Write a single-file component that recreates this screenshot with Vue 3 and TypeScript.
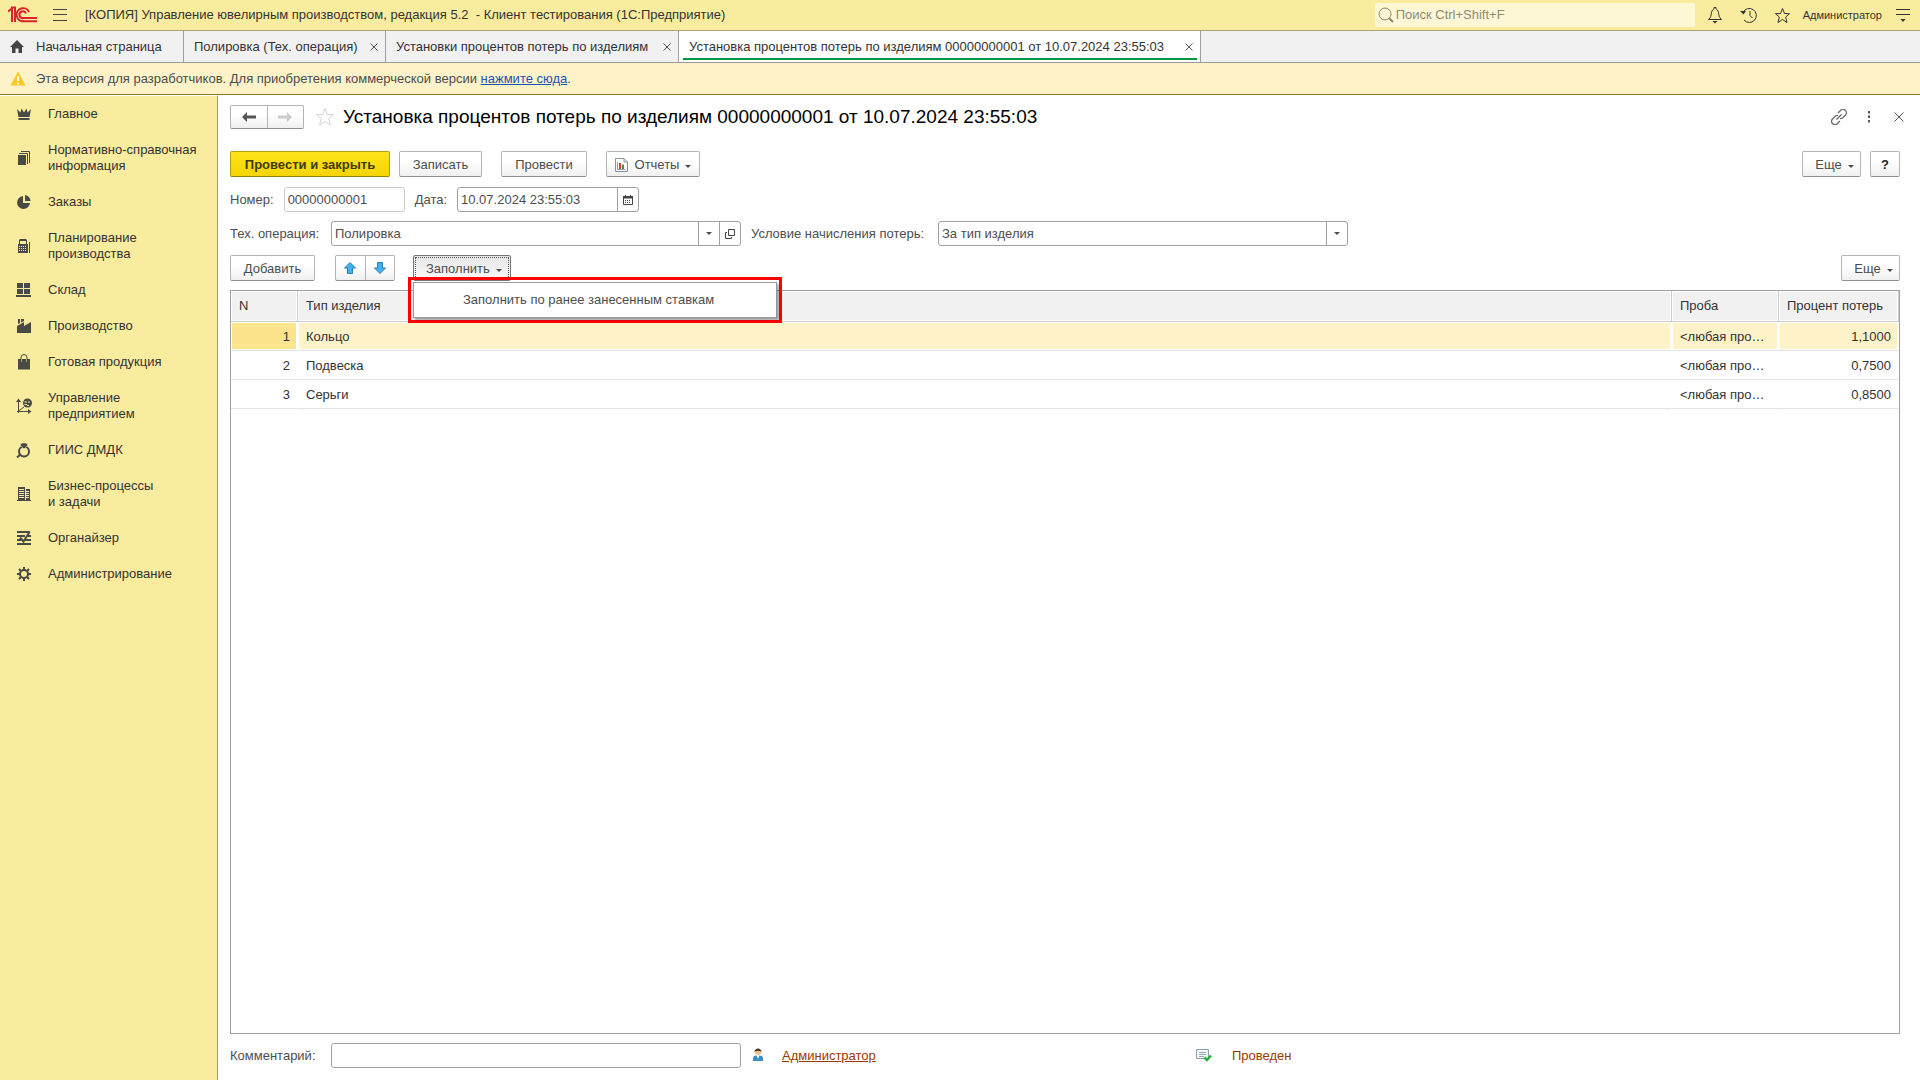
<script setup lang="ts">
import { ref } from 'vue'

interface Tab {
  title: string
  width: number
  active?: boolean
}
interface Section {
  icon: string
  lines: string[]
}
interface LossRow {
  n: number
  type: string
  probe: string
  percent: string
}

const tabs: Tab[] = [
  { title: 'Полировка (Тех. операция)', width: 202 },
  { title: 'Установки процентов потерь по изделиям', width: 293 },
  { title: 'Установка процентов потерь по изделиям 00000000001 от 10.07.2024 23:55:03', width: 522, active: true },
]

const sections: Section[] = [
  { icon: 'crown', lines: ['Главное'] },
  { icon: 'books', lines: ['Нормативно-справочная', 'информация'] },
  { icon: 'pie', lines: ['Заказы'] },
  { icon: 'calc', lines: ['Планирование', 'производства'] },
  { icon: 'boxes', lines: ['Склад'] },
  { icon: 'factory', lines: ['Производство'] },
  { icon: 'bag', lines: ['Готовая продукция'] },
  { icon: 'chart', lines: ['Управление', 'предприятием'] },
  { icon: 'ring', lines: ['ГИИС ДМДК'] },
  { icon: 'building', lines: ['Бизнес-процессы', 'и задачи'] },
  { icon: 'organizer', lines: ['Органайзер'] },
  { icon: 'gear', lines: ['Администрирование'] },
]

const rows: LossRow[] = [
  { n: 1, type: 'Кольцо', probe: '<любая про…', percent: '1,1000' },
  { n: 2, type: 'Подвеска', probe: '<любая про…', percent: '0,7500' },
  { n: 3, type: 'Серьги', probe: '<любая про…', percent: '0,8500' },
]

const selected = ref(1)
const number = ref('00000000001')
const date = ref('10.07.2024 23:55:03')
const operation = ref('Полировка')
const condition = ref('За тип изделия')
const comment = ref('')
const search = ref('')
</script>

<template>
  <div class="app">
    <header class="titlebar">
      <svg class="logo" width="30" height="18" viewBox="0 0 30 18" fill="none" stroke="#d9232e" stroke-width="2">
        <path d="M0 5.500L4 2.500V16M3 1.500H7V16" />
        <path d="M21 6A6.500 6.500 0 1 0 15.500 15.200H29" />
        <path d="M18 7.500A3.400 3.400 0 1 0 15.500 12H29" />
      </svg>
      <button class="plain burger" aria-label="Меню">
        <svg width="14" height="14" viewBox="0 0 14 14" stroke="#444" stroke-width="1"><path d="M0 1.500H14M0 6.500H14M0 12.500H14" /></svg>
      </button>
      <div class="app-name">[КОПИЯ] Управление ювелирным производством, редакция 5.2 &nbsp;- Клиент тестирования (1С:Предприятие)</div>
      <label class="search">
        <svg width="16" height="16" viewBox="0 0 16 16" fill="none" stroke="#8e8868"><circle cx="7" cy="7" r="6" /><path d="M11 11L15 15" stroke-width="2" /></svg>
        <input v-model="search" type="text" placeholder="Поиск Ctrl+Shift+F" aria-label="Поиск" />
      </label>
      <button class="plain tool" aria-label="Уведомления">
        <svg width="16" height="18" viewBox="0 0 16 18" fill="none" stroke="#333"><path d="M1.500 13.500C4 11 4 10 4.500 6.500C5 4 6 3.500 7 3V1.500H9V3C10 3.500 11 4 11.500 6.500C12 10 12 11 14.500 13.500Z" /><path d="M5.500 15H10.500L8 17.500Z" fill="#333" stroke="none" /></svg>
      </button>
      <button class="plain tool" aria-label="История">
        <svg width="18" height="18" viewBox="0 0 18 18" fill="none" stroke="#333"><path d="M3 6.500A7 7 0 1 1 4 14M10 5V9.500L12.500 12" /><path d="M0 5L6 5L3.500 8.500Z" fill="#333" stroke="none" /></svg>
      </button>
      <button class="plain tool" aria-label="Избранное">
        <svg width="17" height="17" viewBox="0 0 17 17" fill="none" stroke="#333"><path d="M8.500 1.500L10.500 6.500L15.500 6.700L11.700 10L13 15.500L8.500 12.500L4 15.500L5.300 10L1.500 6.700L6.500 6.500Z" /></svg>
      </button>
      <div class="user">Администратор</div>
      <button class="plain settings" aria-label="Настройки">
        <svg width="14" height="14" viewBox="0 0 14 14" stroke="#333"><path d="M0 1.500H14M0 6.500H14" /><path d="M4.500 11H9.500L7 14Z" fill="#333" stroke="none" /></svg>
      </button>
    </header>

    <nav class="tabs">
      <button class="tab home">
        <svg width="14" height="13" viewBox="0 0 14 13" fill="#444"><path d="M7 0L14 7H12V13H8.500V8.500H5.500V13H2V7H0Z" /></svg>
        <span>Начальная страница</span>
      </button>
      <button v-for="tab in tabs" :key="tab.title" class="tab" :class="{ active: tab.active }" :style="{ width: tab.width + 'px' }">
        <span>{{ tab.title }}</span>
        <svg width="8" height="8" viewBox="0 0 8 8" stroke="#555" stroke-width="1"><path d="M0.500 0.500L7.500 7.500M7.500 0.500L0.500 7.500" /></svg>
      </button>
    </nav>

    <div class="banner">
      <svg width="16" height="15" viewBox="0 0 16 15"><path d="M8 0.500L15.500 14.500H0.500Z" fill="#fbc926" /><path d="M8 5V10M8 11.500V13.500" stroke="#fff" stroke-width="2" /></svg>
      <span>Эта версия для разработчиков. Для приобретения коммерческой версии <a href="#">нажмите сюда</a>.</span>
    </div>

    <div class="body">
      <aside class="sidebar">
        <a v-for="s in sections" :key="s.icon" href="#" class="section">
          <svg width="16" height="16" viewBox="0 0 16 16" fill="#4a4a44">
            <path v-if="s.icon === 'crown'" d="M1 3L4.500 6.500L5.500 2.500L8 6.500L10.500 2.500L11.500 6.500L15 3L13.500 11H2.500ZM2.500 12H13.500V14H2.500Z" />
            <template v-else-if="s.icon === 'books'">
              <path d="M2 5H10V15H2Z" />
              <path d="M3 3.500H11.500V14M5 1.500H13.500V13" fill="none" stroke="#4a4a44" />
            </template>
            <template v-else-if="s.icon === 'pie'">
              <path d="M7 2A6.500 6.500 0 1 0 14 9H7Z" />
              <path d="M9 1A6.500 6.500 0 0 1 14.500 7H9Z" />
            </template>
            <template v-else-if="s.icon === 'calc'">
              <path d="M2 6H12V15H2ZM4 1H10L11 2V6H3V2Z" />
              <path d="M4 3H10V6H4Z" fill="#faec9e" />
              <path d="M3 8.500H11M3 10.500H11M3 12.500H11" stroke="#faec9e" stroke-dasharray="1 1" />
              <path d="M13.500 4V15" stroke="#4a4a44" />
            </template>
            <path v-else-if="s.icon === 'boxes'" d="M1 1H7V6H1ZM8 1H14V6H8ZM1 7H7V12H1ZM8 7H14V12H8ZM0 13H15V15H0Z" />
            <path v-else-if="s.icon === 'factory'" d="M2 1H4V5L2 6ZM5 1H8V3L5 4.500ZM1 8L8 4V8L15 4V15H1Z" />
            <template v-else-if="s.icon === 'bag'">
              <path d="M2 5H14V15.500H2Z" />
              <path d="M5.500 8V5M10.500 8V5" stroke="#a39b70" />
              <path d="M5 5V3.500A3 3 0 0 1 11 3.500V5" fill="none" stroke="#4a4a44" />
            </template>
            <template v-else-if="s.icon === 'chart'">
              <path d="M2.500 2V15M1 13.500H14M2.500 13L8 9" stroke="#4a4a44" />
              <path d="M0 4L2.500 0.500L5 4ZM12 11L15.500 13.500L12 16Z" />
              <circle cx="11.500" cy="5" r="4.500" />
              <path d="M8.500 4H11M8.500 6.500H11M13 3V5M11 7.500H13" stroke="#faec9e" />
            </template>
            <template v-else-if="s.icon === 'ring'">
              <circle cx="8" cy="9.500" r="5" fill="none" stroke="#4a4a44" stroke-width="2" />
              <path d="M6 1H10L12 3L8 7L4 3Z" stroke="#faec9e" stroke-width="0.500" />
              <path d="M5 12L1 15.500" stroke="#4a4a44" stroke-width="2" />
            </template>
            <template v-else-if="s.icon === 'building'">
              <path d="M2 1H9V15H2ZM10 3H14V15H10ZM1 14H15V15H1Z" />
              <path d="M3 3.500H8M3 5.500H8M3 7.500H8M3 9.500H8M3 11.500H8M10 5.500H13M10 7.500H13M10 9.500H13M10 11.500H13" stroke="#faec9e" />
            </template>
            <path v-else-if="s.icon === 'organizer'" d="M1 2H14M1 6H9M12 6H15M1 10H5M9 10H15M1 14H15M4 7.500L7.500 11.500L13.500 2" fill="none" stroke="#4a4a44" stroke-width="2" />
            <template v-else>
              <circle cx="8" cy="8" r="4" fill="none" stroke="#4a4a44" stroke-width="2" />
              <path d="M8 1V4M8 12V15M1 8H4M12 8H15M3 3L5 5M11 11L13 13M13 3L11 5M5 11L3 13" stroke="#4a4a44" stroke-width="2" />
            </template>
          </svg>
          <span><template v-for="(line, i) in s.lines" :key="line"><br v-if="i > 0" />{{ line }}</template></span>
        </a>
      </aside>

      <main class="form">
        <div class="heading">
          <div class="pair">
            <button aria-label="Назад"><svg width="14" height="10" viewBox="0 0 14 10"><path d="M0 5L5 0V3.500H14V6.500H5V10Z" fill="#555" /></svg></button>
            <button aria-label="Вперед"><svg width="14" height="10" viewBox="0 0 14 10"><path d="M14 5L9 0V3.500H0V6.500H9V10Z" fill="#ccc" /></svg></button>
          </div>
          <button class="plain star" aria-label="В избранное">
            <svg width="20" height="20" viewBox="0 0 20 20" fill="none" stroke="#d4d4d4"><path d="M10 1.500L12.300 7.500L18.500 7.700L13.700 11.600L15.400 18L10 14.400L4.600 18L6.300 11.600L1.500 7.700L7.700 7.500Z" /></svg>
          </button>
          <h1>Установка процентов потерь по изделиям 00000000001 от 10.07.2024 23:55:03</h1>
          <div class="window-tools">
            <button class="plain" aria-label="Ссылка">
              <svg width="16" height="16" viewBox="0 0 16 16" fill="none" stroke="#666" stroke-width="1.200"><path d="M7 4L9.500 1.500A3 3 0 0 1 14.500 6L11.500 9A3 3 0 0 1 9 9.500M9 12L6.500 14.500A3 3 0 0 1 1.500 10L4.500 7A3 3 0 0 1 7 6.500M5.500 10.500L10.500 5.500" /></svg>
            </button>
            <button class="plain" aria-label="Еще действия">
              <svg width="16" height="12" viewBox="0 0 16 12" fill="#555"><path d="M7 0H9V2.500H7ZM7 4.500H9V7H7ZM7 9H9V11.500H7Z" /></svg>
            </button>
            <button class="plain" aria-label="Закрыть">
              <svg width="16" height="10" viewBox="0 0 16 10" stroke="#555"><path d="M3.500 0.500L12.500 9.500M12.500 0.500L3.500 9.500" /></svg>
            </button>
          </div>
        </div>

        <div class="commands">
          <button class="btn primary">Провести и закрыть</button>
          <button class="btn save">Записать</button>
          <button class="btn post">Провести</button>
          <button class="btn reports">
            <svg width="13" height="14" viewBox="0 0 13 14"><path d="M0.500 0.500H9L12.500 4V13.500H0.500Z" fill="#fff" stroke="#8595a5" /><path d="M9 0.500V4H12.500" fill="none" stroke="#8595a5" /><path d="M2.500 4V11.500H10.500" fill="none" stroke="#99a" /><path d="M4 5H6V11H4Z" fill="#e23b30" /><path d="M7 6.500H9V11H7Z" fill="#2f9e3f" /></svg>
            Отчеты<i class="caret"></i>
          </button>
          <button class="btn more right">Еще<i class="caret"></i></button>
          <button class="btn help">?</button>
        </div>

        <div class="fields head-fields">
          <label for="number">Номер:</label>
          <div class="field pale number"><input id="number" v-model="number" type="text" /></div>
          <label for="date">Дата:</label>
          <div class="field date">
            <input id="date" v-model="date" type="text" />
            <button aria-label="Выбрать дату">
              <svg width="10" height="10" viewBox="0 0 10 10"><path d="M0.500 1.500H9.500V9.500H0.500Z" fill="none" stroke="#444" /><path d="M0 1H10V3.500H0ZM2 0H3V1H2ZM7 0H8V1H7Z" fill="#444" /><path d="M2 5.500H8M2 7.500H8" stroke="#444" stroke-dasharray="1 1" /></svg>
            </button>
          </div>
        </div>

        <div class="fields">
          <label for="operation" class="first">Тех. операция:</label>
          <div class="field wide">
            <input id="operation" v-model="operation" type="text" />
            <button aria-label="Выбрать из списка"><i class="caret"></i></button>
            <button aria-label="Открыть"><svg width="10" height="10" viewBox="0 0 10 10" fill="none" stroke="#444"><path d="M3.500 0.500H9.500V6.500H3.500ZM2 3.500H0.500V9.500H6.500V8" /></svg></button>
          </div>
          <label for="condition" class="second">Условие начисления потерь:</label>
          <div class="field wide">
            <select id="condition" v-model="condition"><option>За тип изделия</option></select>
            <span class="drop"><i class="caret"></i></span>
          </div>
        </div>

        <div class="commands table-commands">
          <button class="btn add">Добавить</button>
          <div class="pair arrows">
            <button aria-label="Вверх"><svg width="12" height="12" viewBox="0 0 12 12"><path d="M6 0.500L11.500 6H8.500V11.500H3.500V6H0.500Z" fill="#43b0f1" stroke="#2a7fb5" /></svg></button>
            <button aria-label="Вниз"><svg width="12" height="12" viewBox="0 0 12 12"><path d="M6 11.500L11.500 6H8.500V0.500H3.500V6H0.500Z" fill="#43b0f1" stroke="#2a7fb5" /></svg></button>
          </div>
          <div class="fill">
            <button class="btn pressed">Заполнить<i class="caret"></i></button>
            <div class="highlight">
              <div class="menu" role="menu"><button role="menuitem">Заполнить по ранее занесенным ставкам</button></div>
            </div>
          </div>
          <button class="btn more right">Еще<i class="caret"></i></button>
        </div>

        <div class="grid">
          <table>
            <colgroup><col class="c-n" /><col /><col class="c-probe" /><col class="c-percent" /></colgroup>
            <thead>
              <tr><th>N</th><th>Тип изделия</th><th>Проба</th><th>Процент потерь</th></tr>
            </thead>
            <tbody>
              <tr v-for="row in rows" :key="row.n" :class="{ selected: row.n === selected }" @click="selected = row.n">
                <td class="num">{{ row.n }}</td>
                <td>{{ row.type }}</td>
                <td>{{ row.probe }}</td>
                <td class="num">{{ row.percent }}</td>
              </tr>
            </tbody>
          </table>
        </div>

        <footer class="fields footer">
          <label for="comment" class="first">Комментарий:</label>
          <div class="field wide"><input id="comment" v-model="comment" type="text" /></div>
          <div class="author">
            <svg width="10" height="13" viewBox="0 0 10 13"><path d="M0 13V10C0 8 2 7.500 5 7.500S10 8 10 10V13Z" fill="#3a8fc4" /><path d="M3.500 7H6.500L5 11Z" fill="#fff" /><circle cx="5" cy="4" r="3" fill="#f2bf7e" /><path d="M1.500 4.500C1 -1 9 -1 8.500 4.500L7.500 3H2.500Z" fill="#4a3b2c" /></svg>
            <a href="#">Администратор</a>
          </div>
          <div class="status">
            <svg width="16" height="13" viewBox="0 0 16 13" fill="none"><path d="M0.500 0.500H12.500V9.500H0.500Z" fill="#f4f8fb" stroke="#8d9db0" /><path d="M3 3.500H10M3 5.500H10M3 7.500H8" stroke="#9aa8b8" /><path d="M8.500 8.500L11 11L15 6.500" stroke="#25b03c" stroke-width="2.500" /></svg>
            <span>Проведен</span>
          </div>
        </footer>
      </main>
    </div>
  </div>
</template>

<style>
body {
  margin: 0;
}
</style>

<style scoped>
.app {
  display: flex;
  flex-direction: column;
  min-height: 100vh;
  background: #fff;
  color: #333;
  font: 13px/16px 'Liberation Sans', Arial, sans-serif;
}
.app *,
.app {
  box-sizing: border-box;
}
button,
input,
select {
  font: inherit;
  color: inherit;
  margin: 0;
}
svg {
  display: block;
  flex: none;
}
button {
  padding: 0;
  cursor: pointer;
}
.plain {
  display: flex;
  justify-content: center;
  border: 0;
  background: none;
}

.titlebar {
  display: flex;
  align-items: center;
  height: 31px;
  padding: 0 10px 0 8px;
  background: #faec9e;
  border-bottom: 1px solid #aca272;
}
.burger {
  margin-left: 15px;
}
.app-name {
  margin-left: 18px;
  flex: 1;
  white-space: nowrap;
}
.search {
  display: flex;
  align-items: center;
  width: 320px;
  height: 24px;
  margin-right: 3px;
  padding-left: 3px;
  gap: 2px;
  background: #fdf7d6;
  border-radius: 2px;
}
.search input {
  flex: 1;
  min-width: 0;
  padding: 0;
  border: 0;
  outline: 0;
  background: none;
}
.search input::placeholder {
  color: #8f8b75;
}
.tool {
  width: 34px;
}
.user {
  margin: 0 14px 0 3px;
  font-size: 11px;
}

.tabs {
  display: flex;
  height: 32px;
  background: #f1f1f1;
  border-bottom: 1px solid #9a9a9a;
}
.tab {
  display: flex;
  align-items: center;
  justify-content: space-between;
  padding: 0 7px 0 10px;
  border: 0;
  border-right: 1px solid #a0a0a0;
  background: none;
  white-space: nowrap;
}
.tab.home {
  justify-content: flex-start;
  gap: 12px;
  width: 184px;
}
.tab.active {
  background: linear-gradient(#009646, #009646) 4px 27px / calc(100% - 7px) 2px no-repeat #fff;
}

.banner {
  display: flex;
  align-items: center;
  gap: 10px;
  height: 32px;
  padding-left: 10px;
  background: #fdf2c8;
  border-bottom: 1px solid #8f7a26;
  color: #4d4d4d;
}
.banner a {
  color: #1a54b0;
}

.body {
  display: flex;
  flex: 1;
}
.sidebar {
  display: flex;
  flex-direction: column;
  flex: none;
  gap: 20px;
  width: 218px;
  padding: 10px 0 0 16px;
  background: #faec9e;
  border-top: 1px solid #fff;
  border-right: 1px solid #a09a70;
}
.section {
  display: flex;
  align-items: center;
  gap: 16px;
  color: #333;
  text-decoration: none;
}

.form {
  display: flex;
  flex-direction: column;
  flex: 1;
  min-width: 0;
  padding: 10px 20px 12px 12px;
}
.heading {
  display: flex;
  align-items: center;
  height: 24px;
}
.pair {
  display: flex;
  width: 74px;
  height: 24px;
  border: 1px solid #b4b4b4;
  border-bottom-color: #909090;
  border-radius: 2px;
  background: linear-gradient(#fff 40%, #f0f0f0);
}
.pair button {
  display: flex;
  flex: 1;
  align-items: center;
  justify-content: center;
  border: 0;
  background: none;
}
.pair button + button {
  border-left: 1px solid #b4b4b4;
}
.star {
  margin-left: 11px;
}
h1 {
  margin: 0 0 0 8px;
  flex: 1;
  color: #000;
  font-size: 19px;
  font-weight: 400;
  line-height: 24px;
  white-space: nowrap;
}
.window-tools {
  display: flex;
  align-items: center;
  gap: 14px;
  margin-right: -7px;
}

.commands {
  display: flex;
  margin-top: 22px;
}
.btn {
  display: flex;
  align-items: center;
  justify-content: center;
  height: 26px;
  padding-top: 1px;
  border: 1px solid #b4b4b4;
  border-bottom-color: #909090;
  border-radius: 2px;
  background: linear-gradient(#fff 40%, #f0f0f0);
  color: #4d4d4d;
}
.primary {
  width: 160px;
  border-color: #b59e0c;
  border-bottom-color: #94810a;
  background: linear-gradient(#ffe31c, #f5d400);
  color: #403a10;
  font-weight: 700;
}
.save {
  width: 83px;
  margin-left: 9px;
}
.post {
  width: 86px;
  margin-left: 19px;
}
.reports {
  width: 94px;
  margin-left: 19px;
}
.reports svg {
  margin-right: 7px;
}
.more {
  width: 59px;
  padding-left: 6px;
}
.right {
  margin-left: auto;
}
.help {
  width: 30px;
  margin-left: 9px;
  color: #222;
  font-weight: 700;
}
.caret {
  margin: 3px 0 0 6px;
  border: 3px solid transparent;
  border-top-color: #4d4d4d;
  border-bottom: 0;
}

.fields {
  display: flex;
  align-items: center;
  margin-top: 9px;
  color: #4d4d4d;
}
.head-fields {
  margin-top: 10px;
}
.first {
  width: 101px;
}
.second {
  width: 197px;
  padding-left: 10px;
}
.field {
  display: flex;
  height: 25px;
  border: 1px solid #a0a0a0;
  border-radius: 3px;
  background: #fff;
}
.field.pale {
  border-color: #ccc;
}
.field input,
.field select {
  flex: 1;
  min-width: 0;
  padding: 0 3px;
  border: 0;
  outline: 0;
  background: none;
  appearance: none;
}
.field button,
.field .drop {
  display: flex;
  align-items: center;
  justify-content: center;
  width: 21px;
  border: 0;
  border-left: 1px solid #a0a0a0;
  background: none;
}
.field .caret {
  margin: 0;
}
.number {
  width: 121px;
  margin: 0 10px;
}
.date {
  width: 182px;
  margin-left: 10px;
}
.wide {
  width: 410px;
}

.table-commands {
  margin-top: 9px;
}
.add {
  width: 85px;
}
.arrows {
  width: 60px;
  height: 26px;
  margin: 0 18px 0 20px;
}
.fill {
  position: relative;
}
.pressed {
  justify-content: flex-start;
  width: 98px;
  padding-left: 12px;
  border-color: #777;
  outline: 1px dotted #555;
  outline-offset: -3px;
  background: linear-gradient(#e6e6e6, #fafafa);
}
.highlight {
  position: absolute;
  top: 22px;
  left: -5px;
  z-index: 1;
  padding: 2px;
  border: 3px solid #f00;
}
.menu {
  width: 364px;
  padding: 4px 0;
  border: 1px solid #999;
  background: #fff;
  box-shadow: 2px 2px 2px rgba(0, 0, 0, 0.35);
}
.menu button {
  display: block;
  width: 100%;
  height: 26px;
  padding: 0 0 0 49px;
  border: 0;
  background: none;
  color: #4d4d4d;
  text-align: left;
}

.grid {
  flex: 1;
  margin-top: 9px;
  border: 1px solid #a0a0a0;
}
table {
  width: 100%;
  table-layout: fixed;
  border-collapse: separate;
  border-spacing: 0;
}
.c-n {
  width: 67px;
}
.c-probe {
  width: 107px;
}
.c-percent {
  width: 120px;
}
th {
  height: 31px;
  padding: 0 8px;
  border-right: 1px solid #ccc;
  border-bottom: 1px solid #ccc;
  background: #f1f1f1;
  box-shadow: inset 0 0 0 1px #fff;
  font-weight: 400;
  text-align: left;
  white-space: nowrap;
}
td {
  height: 29px;
  padding: 2px 8px 0;
  border-right: 1px solid #fff;
  border-bottom: 1px solid #e2e2e2;
  box-shadow: inset 0 0 0 1px #fff;
  white-space: nowrap;
}
.num {
  padding-right: 7px;
  text-align: right;
}
.selected td {
  background: #fdf2c8;
}
.selected td:first-child {
  background: #fce48c;
}

.author {
  display: flex;
  gap: 19px;
  width: 443px;
  margin-left: 12px;
}
.author a {
  color: #983a00;
}
.status {
  display: flex;
  align-items: center;
  gap: 20px;
  color: #983a00;
}
</style>
